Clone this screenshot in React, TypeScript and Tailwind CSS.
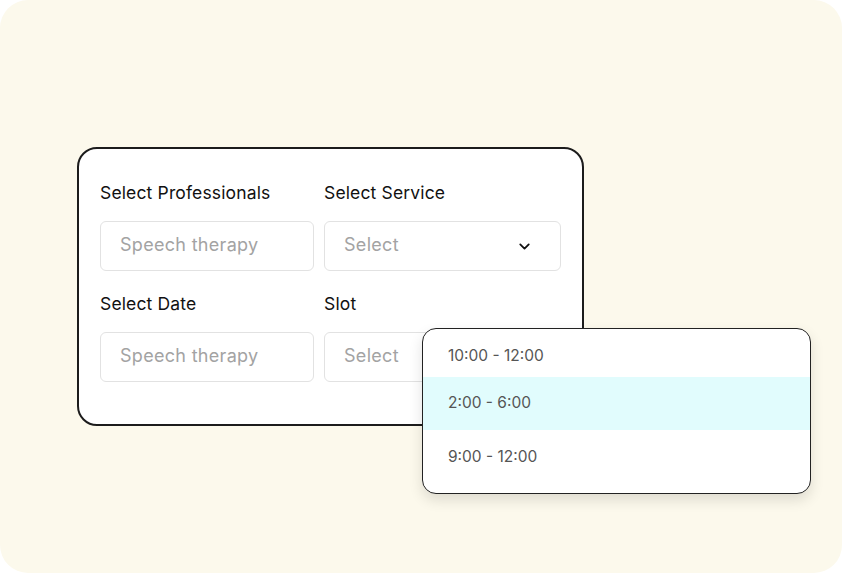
import { ChevronDown } from 'lucide-react'

const SLOTS = ['10:00 - 12:00', '2:00 - 6:00', '9:00 - 12:00']

function Field({ label, placeholder, chevron }: { label: string; placeholder: string; chevron?: boolean }) {
  return (
    <div className="flex flex-col">
      <span className="h-[22px] text-[17.5px] leading-[23px] tracking-[0.15px] text-[#111]">{label}</span>
      <div className="mt-[18px] flex h-[50px] items-center justify-between rounded-md border border-[#e2e2e2] bg-white pb-[4px] pl-[19px] pr-[27px]">
        <span className="text-[18px] tracking-[0.3px] text-[#a3a3a3]">{placeholder}</span>
        {chevron && <ChevronDown size={17} strokeWidth={2.5} className="mt-[4px] text-[#111]" />}
      </div>
    </div>
  )
}

export default function App() {
  return (
    <div className="h-[573px] w-[842px] bg-white" style={{ fontFamily: 'Inter, "Noto Sans", sans-serif' }}>
      <div className="h-full w-full rounded-[28px] bg-[#fcf9ec] pl-[77px] pt-[147px]">
        <div className="relative w-[507px] rounded-[20px] border-2 border-[#1c1c1c] bg-white px-[21px] pb-[42px] pt-[32px]">
          <div className="grid grid-cols-[214px_237px] gap-x-[10px] gap-y-[21px]">
            <Field label="Select Professionals" placeholder="Speech therapy" />
            <Field label="Select Service" placeholder="Select" chevron />
            <Field label="Select Date" placeholder="Speech therapy" />
            <Field label="Slot" placeholder="Select" />
          </div>

          {/* Slot dropdown */}
          <div className="absolute left-[343px] top-[179px] w-[389px] overflow-hidden rounded-[14px] border-[1.5px] border-[#222] bg-white pb-[11px] shadow-[0_6px_14px_rgba(0,0,0,0.12)]">
            {SLOTS.map((slot, i) => (
              <div
                key={slot}
                className={
                  i === 1
                    ? 'flex h-[53px] items-center bg-[#e1fcfd] pb-[1px] pl-[25px] text-[15.5px] text-[#555]'
                    : i === 0
                      ? 'flex h-[48px] items-center pl-[25px] pt-[6px] text-[15.5px] text-[#555]'
                      : 'flex h-[52px] items-center pl-[25px] pt-[2px] text-[15.5px] text-[#555]'
                }
              >
                {slot}
              </div>
            ))}
          </div>
        </div>
      </div>
    </div>
  )
}
